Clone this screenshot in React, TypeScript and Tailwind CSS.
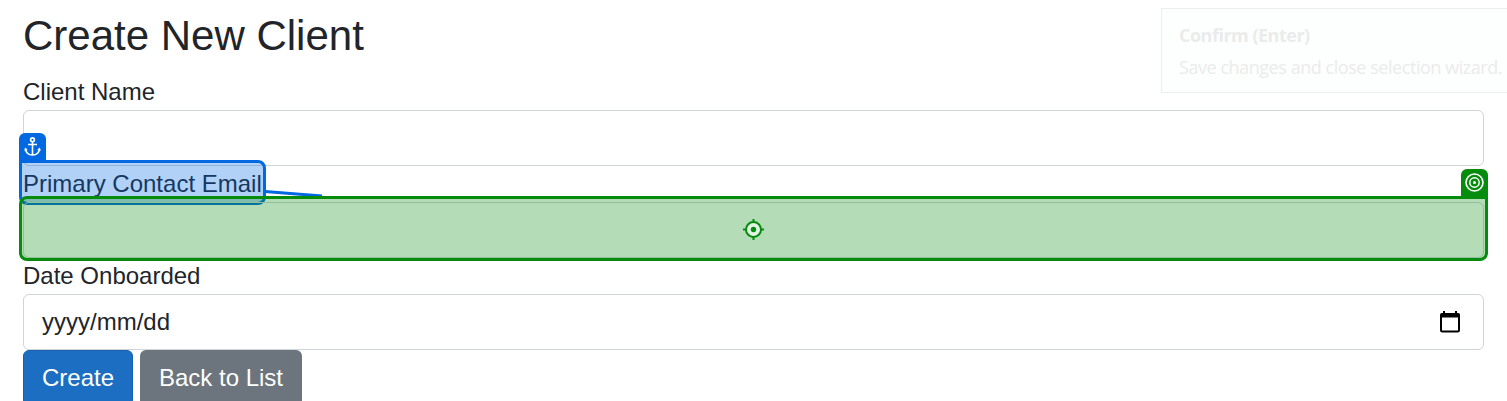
import type { ReactNode } from 'react';

function Label({ children }: { children: ReactNode }) {
  return <label className="block h-9 leading-9">{children}</label>;
}

function Anchor() {
  return (
    <svg className="h-[20px] w-[17px]" viewBox="0 0 17 20" fill="none" stroke="white" strokeWidth="1.6">
      <circle cx="8.500" cy="2.800" r="1.900" />
      <path d="M8.500 4.700v13.500M4 7.500h9" />
      <path d="M1.400 11.500c.5 4.300 3.300 6.500 7.100 6.500s6.600-2.200 7.100-6.500" />
      <path d="M.3 14l.9-3.500 2.600 2.500zM16.700 14l-.9-3.500-2.600 2.500z" fill="white" stroke="none" />
    </svg>
  );
}

function Target() {
  return (
    <svg className="size-[19px]" viewBox="0 0 19 19" fill="none" stroke="white">
      <circle cx="9.500" cy="9.500" r="8.500" strokeWidth="1.600" />
      <circle cx="9.500" cy="9.500" r="4.700" strokeWidth="1.500" />
      <circle cx="9.500" cy="9.500" r="1.500" fill="white" stroke="none" />
    </svg>
  );
}

function Crosshair() {
  return (
    <svg className="relative top-[0.500px] size-[21px]" viewBox="0 0 21 21" fill="none" stroke="#058c0c" strokeWidth="2">
      <circle cx="10.500" cy="10.500" r="7.500" fill="#e3f3e4" />
      <path d="M10.500 0v3.500M10.500 17.500v3.500M0 10.500h3.500M17.500 10.500h3.500" />
      <circle cx="10.500" cy="10.500" r="2.700" fill="#058c0c" stroke="none" />
    </svg>
  );
}

export default function App() {
  return (
    <main className="relative h-[401px] w-full overflow-hidden bg-white pr-[23px] pl-[23px] font-['Liberation_Sans',Arial,sans-serif] text-[24px] text-[#212529]">
      <h1 className="h-[74px] pt-[11px] text-[42px] leading-[50px]">Create New Client</h1>
      <form>
        <Label>Client Name</Label>
        <div className="h-14 rounded-md border border-[#ced4da]" />
        <div className="relative">
          <Label>Primary Contact Email</Label>
          <div className="absolute -top-[6px] -left-[4px] h-[45px] w-[247px] rounded-[8px] rounded-tl-none border-[3px] border-[#0068e0] bg-[#0068e0]/30" />
          <div className="absolute -top-[33px] -left-[4px] flex h-[28px] w-[27px] justify-center rounded-t-[6px] bg-[#0068e0] pt-[4px]">
            <Anchor />
          </div>
          <svg className="absolute top-[22px] left-[242px] h-[14px] w-[62px]" viewBox="0 0 62 14">
            <path d="M0 3.500L57 8" stroke="#0068e0" strokeWidth="3" />
          </svg>
        </div>
        <div className="relative h-14 rounded-md border border-[#ced4da]">
          <div className="absolute -top-[7px] -right-[5px] -bottom-[4px] -left-[5px] flex items-center justify-center rounded-[8px] rounded-tr-none border-[3px] border-[#058c0c] bg-[#058c0c]/30">
            <Crosshair />
          </div>
          <div className="absolute -top-[34px] -right-[5px] flex h-[28px] w-[27px] justify-center rounded-t-[6px] bg-[#058c0c] pt-[4px]">
            <Target />
          </div>
        </div>
        <Label>Date Onboarded</Label>
        <div className="flex h-14 items-center justify-between rounded-md border border-[#ced4da] pr-[23px] pl-[18px]">
          <span>yyyy/mm/dd</span>
          <svg className="h-[22px] w-[20px]" viewBox="0 0 20 22" fill="none" stroke="black">
            <rect x="1" y="3" width="18" height="17.500" rx="1.500" strokeWidth="2" />
            <path d="M.5 4.500h19" strokeWidth="4" />
            <path d="M4 0v3M16 0v3" strokeWidth="2" />
          </svg>
        </div>
        <div className="flex gap-[7px]">
          <button type="button" className="h-14 w-[110px] rounded-md border border-[#1861ac] bg-[#1b6ec2] text-white">Create</button>
          <button type="button" className="h-14 w-[162px] rounded-md bg-[#6c757d] text-white">Back to List</button>
        </div>
      </form>
      <aside className="absolute top-[8px] left-[1161px] h-[85px] w-[360px] border border-[#ededed] bg-[#fdfffe] pt-[10px] pl-[17px] font-['Open_Sans','Noto_Sans',sans-serif] text-[18px] leading-[32px] whitespace-nowrap text-[#ebebeb]">
        <div className="font-bold tracking-[-0.500px]">Confirm (Enter)</div>
        <div className="tracking-[-0.450px]">Save changes and close selection wizard.</div>
      </aside>
    </main>
  );
}
